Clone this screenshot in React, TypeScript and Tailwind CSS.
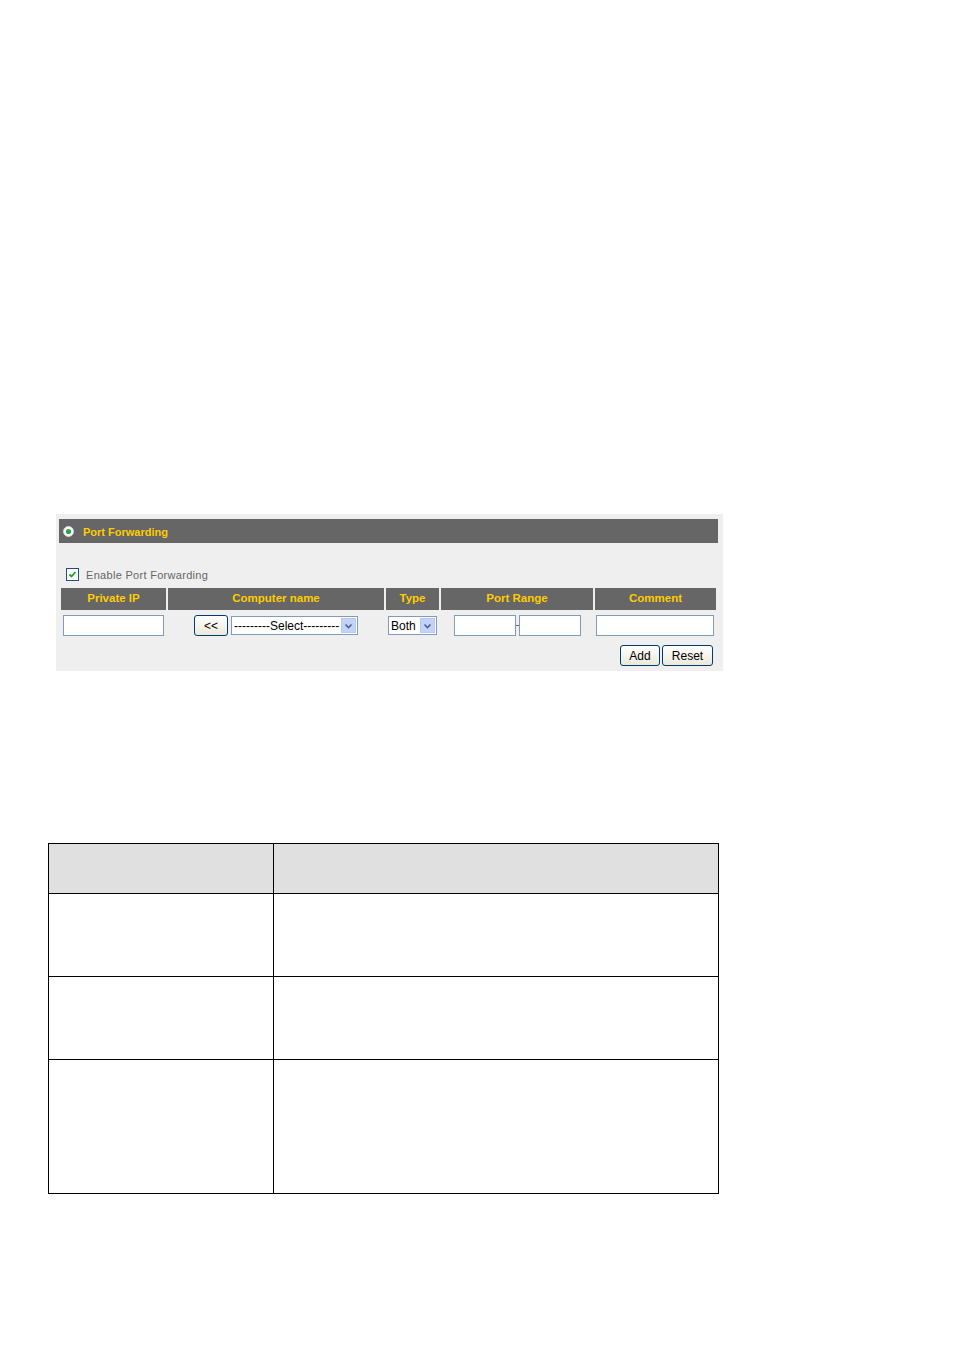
import React from "react";

const xpInput = "h-[21px] bg-white border border-[#7f9db9]";
const xpButton =
  "h-[21px] rounded-[3px] border border-[#003c74] bg-gradient-to-b from-white to-[#ece9d8] text-[12px] text-black flex items-center justify-center leading-none";

function RadioDot() {
  return (
    <svg width="11" height="11" viewBox="0 0 11 11">
      <circle cx="5.5" cy="5.5" r="5" fill="#ffffff" stroke="#c9d6e6" strokeWidth="1" />
      <circle cx="5.5" cy="5.5" r="2.6" fill="#27a844" />
    </svg>
  );
}

function CheckBox() {
  return (
    <div className="w-[13px] h-[13px] border border-[#1c5180] bg-white flex items-center justify-center">
      <svg width="9" height="9" viewBox="0 0 9 9">
        <path d="M1.5 4.5 L3.5 6.5 L7.5 2" fill="none" stroke="#21a121" strokeWidth="1.8" />
      </svg>
    </div>
  );
}

function Arrow() {
  return (
    <div className="w-[15px] h-[15px] bg-[#c1d3fb] border border-[#b6c9f3] flex items-center justify-center">
      <svg width="9" height="6" viewBox="0 0 9 6">
        <path d="M1.5 1.5 L4.5 4.5 L7.5 1.5" fill="none" stroke="#4d6185" strokeWidth="1.6" />
      </svg>
    </div>
  );
}

function FakeSelect({ label, width }: { label: string; width: string }) {
  return (
    <div className={`${width} h-[19px] bg-white border border-[#7f9db9] flex items-center justify-between pl-[2px] pr-[1px]`}>
      <span className="text-[12px] text-black leading-none whitespace-nowrap">{label}</span>
      <Arrow />
    </div>
  );
}

const columns = [
  { label: "Private IP", w: "w-[105px]" },
  { label: "Computer name", w: "w-[216px]" },
  { label: "Type", w: "w-[53px]" },
  { label: "Port Range", w: "w-[152px]" },
  { label: "Comment", w: "w-[121px]" },
];

function PortForwardingPanel() {
  return (
    <div className="ml-[56px] w-[667px] h-[157px] bg-[#efefef] pt-[5px] pl-[3px] pr-[5px] font-['Liberation_Sans',Arial,sans-serif]">
      <div className="h-[24px] bg-[#666666] flex items-center pl-[4px] gap-[9px]">
        <RadioDot />
        <span className="text-[11px] font-bold text-[#ffcc00] leading-none pt-[2px]">Port Forwarding</span>
      </div>

      <div className="mt-[25px] ml-[7px] flex items-center gap-[7px] h-[12px]">
        <CheckBox />
        <span className="text-[11px] text-[#666666] tracking-[0.3px] leading-none pt-[3px]">
          Enable Port Forwarding
        </span>
      </div>

      <div className="mt-[8px] ml-[2px] flex gap-[2px]">
        {columns.map((c) => (
          <div
            key={c.label}
            className={`${c.w} h-[22px] bg-[#666666] flex items-center justify-center text-[11.5px] font-bold text-[#ffcc00] leading-none`}
          >
            {c.label}
          </div>
        ))}
      </div>

      <div className="mt-[5px] ml-[2px] flex gap-[2px] items-center">
        <div className="w-[105px] flex justify-center">
          <div className={`${xpInput} w-[101px]`} />
        </div>
        <div className="w-[216px] flex justify-center items-center gap-[3px]">
          <div className={`${xpButton} w-[34px]`}>&lt;&lt;</div>
          <FakeSelect label="---------Select---------" width="w-[127px]" />
        </div>
        <div className="w-[53px] flex justify-center">
          <FakeSelect label="Both" width="w-[49px]" />
        </div>
        <div className="w-[152px] flex justify-center items-center">
          <div className={`${xpInput} w-[62px]`} />
          <div className="w-[3px] h-[1px] bg-[#7a6a4a]" />
          <div className={`${xpInput} w-[62px]`} />
        </div>
        <div className="w-[121px] flex justify-start pl-[1px]">
          <div className={`${xpInput} w-[118px]`} />
        </div>
      </div>

      <div className="mt-[9px] flex justify-end gap-[2px] pr-[5px]">
        <div className={`${xpButton} w-[40px]`}>Add</div>
        <div className={`${xpButton} w-[51px]`}>Reset</div>
      </div>
    </div>
  );
}

function DescriptionTable() {
  const rows = ["h-[83px]", "h-[83px]", "h-[134px]"];
  return (
    <table className="ml-[48px] mt-[172px] border-collapse w-[671px] table-fixed">
      <tbody>
        <tr className="h-[50px] bg-[#e0e0e0]">
          <td className="w-[225px] border border-black" />
          <td className="border border-black" />
        </tr>
        {rows.map((h, i) => (
          <tr key={i} className={h}>
            <td className="border border-black" />
            <td className="border border-black" />
          </tr>
        ))}
      </tbody>
    </table>
  );
}

export default function App() {
  return (
    <div className="w-[954px] min-h-[1350px] bg-white pt-[514px]">
      <PortForwardingPanel />
      <DescriptionTable />
    </div>
  );
}
